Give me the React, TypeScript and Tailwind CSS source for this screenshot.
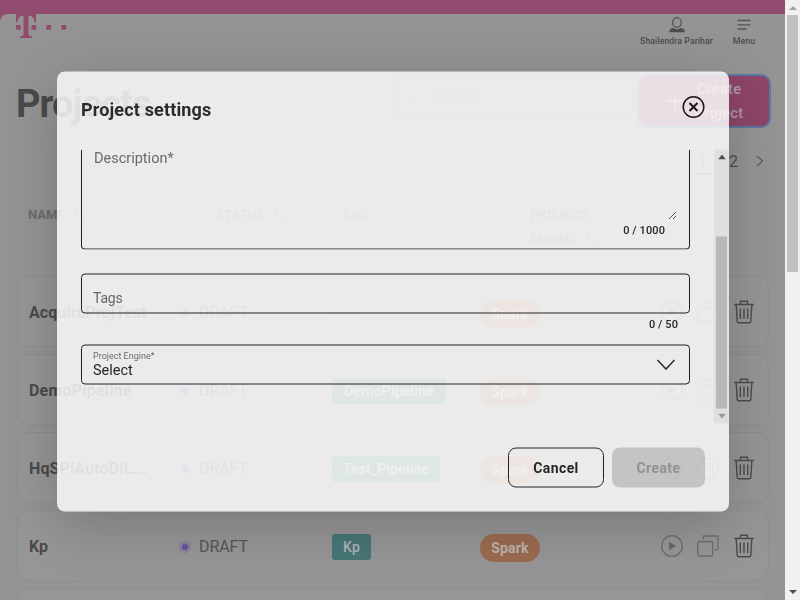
import type { ReactNode } from "react";

type Row = { name: string; nameCls: string; tag: string; tagCls: string };

const rows: Row[] = [
  { name: "AcquireProjTest", nameCls: "tracking-[0.1px]", tag: "----", tagCls: "" },
  { name: "DemoPipeline", nameCls: "tracking-[0.2px]", tag: "DemoPipeline", tagCls: "w-[114px]" },
  { name: "HqSPlAutoDIL...", nameCls: "tracking-[0.1px]", tag: "Test_Pipeline", tagCls: "w-[108px]" },
  { name: "Kp", nameCls: "", tag: "Kp", tagCls: "w-[39px]" },
];

function SortArrows() {
  return (
    <svg width="14" height="14" viewBox="0 0 14 14" fill="none" stroke="#7b7b7b" strokeWidth="1.2">
      <path d="M3.5 11V2M1.5 4.5l2-2.5 2 2.5M11 3v9.500M9 10l2 2.500 2-2.500" />
    </svg>
  );
}

function PlayIcon() {
  return (
    <svg width="24" height="24" viewBox="0 0 24 24" fill="none">
      <circle cx="12" cy="12" r="10.300" stroke="#6e6e6e" strokeWidth="1.300" />
      <path d="M9 7.800v8.400l7-4.200z" fill="#666" />
    </svg>
  );
}

function CopyIcon() {
  return (
    <svg width="24" height="24" viewBox="0 0 24 24" fill="none" stroke="#6e6e6e" strokeWidth="1.300">
      <rect x="1.700" y="7.500" width="15" height="14.500" rx="1.500" />
      <path d="M7.500 5.500V2H22v12.500a1.500 1.500 0 0 1-1.500 1.500H18.500" />
    </svg>
  );
}

function TrashIcon() {
  return (
    <svg width="24" height="26" viewBox="0 0 24 26" fill="none" stroke="#4c4c4c" strokeWidth="1.400">
      <path d="M2.200 5.500H21.800M8.500 5V2.200h7V5M4.200 6l1 16.500a1.500 1.500 0 0 0 1.500 1.300h10.600a1.500 1.500 0 0 0 1.500-1.300l1-16.500M8.300 9.500v10.500M12 9.500v10.500M15.700 9.500v10.500" />
    </svg>
  );
}

function TableRow({ row }: { row: Row }) {
  return (
    <div className="flex h-[71px] shrink-0 items-center rounded-xl border border-[#8e8e8e] bg-[#969696] pr-3 pl-[11px]">
      <div className={`w-[150px] pt-[3px] text-base font-bold text-[#4a4a4a] ${row.nameCls}`}>{row.name}</div>
      <div className="flex w-[153px] items-center pt-[3px]">
        <span className="flex size-3 items-center justify-center rounded-full bg-[#8a8299]">
          <span className="size-[6px] rounded-full bg-[#69529b]" />
        </span>
        <span className="ml-2 text-base tracking-[-0.1px] text-[#555]">DRAFT</span>
      </div>
      <div className="w-[148px] pt-[3px]">
        {row.tag === "----" ? (
          <span className="text-base tracking-[2.500px] text-[#555]">----</span>
        ) : (
          <span
            className={`flex h-[26px] items-center justify-center rounded-[3px] bg-[#477676] text-[14px] font-medium tracking-[0.200px] text-[#b0b6b6] ${row.tagCls}`}
          >
            {row.tag}
          </span>
        )}
      </div>
      <span className="mt-1 flex h-7 w-[60px] items-center justify-center rounded-full bg-[#9b6b50] pt-px text-[14px] font-bold tracking-[0.2px] text-[#bbb4af]">
        Spark
      </span>
      <div className="ml-auto flex items-center gap-3">
        <PlayIcon />
        <CopyIcon />
        <TrashIcon />
      </div>
    </div>
  );
}

function HeadCell({ children, className }: { children: ReactNode; className: string }) {
  return <div className={`pt-px text-[13px] leading-6 font-bold text-[#6c6c6c] ${className}`}>{children}</div>;
}

function Page() {
  return (
    <div className="flex h-[600px] w-[785px] flex-col overflow-hidden bg-[#914b6e]">
      <div className="h-[14px] shrink-0" />
      <div className="flex h-[586px] flex-col rounded-tl-lg bg-[#949494]">
        <header className="flex h-[42px] shrink-0 justify-between pr-[29px] pl-4">
          <svg width="51" height="25" viewBox="0 0 51 25" fill="#914b6e">
            <path d="M0 0H20V8.500H18.700C18.300 4.500 16 1.700 12.500 1.500V19.500c0 2.300 1 3 3.500 3V24H4v-1.500c2.500 0 3.500-.7 3.500-3V1.500C4 1.700 1.700 4.500 1.300 8.500H0Z" />
            <path d="M0 11h4.700v4.700H0zM15.500 11h4.700v4.700h-4.700zM30.300 11H35v4.700h-4.700zM45.500 11h4.700v4.700h-4.700z" />
          </svg>
          <div className="flex gap-[19px] pt-[3px] text-[8.700px] font-medium text-[#4d4d4d]">
            <div className="flex w-[74px] flex-col items-center">
              <svg className="ml-px" width="18" height="16" viewBox="0 0 18 16" fill="none">
                <ellipse cx="9" cy="5.500" rx="4.300" ry="4.800" stroke="#4d4d4d" strokeWidth="1.200" />
                <path d="M1.200 15.300c0-2.800 1.800-4.200 4.200-4.200 2 1.600 5.200 1.600 7.200 0 2.400 0 4.200 1.400 4.200 4.200z" fill="#4d4d4d" />
              </svg>
              <span className="mt-[2px] ml-px leading-3 tracking-[0.08px] whitespace-nowrap">Shailendra Parihar</span>
            </div>
            <div className="flex w-6 flex-col items-center">
              <svg width="14" height="16" viewBox="0 0 14 16" stroke="#555" strokeWidth="1.300">
                <path d="M.5 3.500h13M.5 7.800h13M.5 12h9" />
              </svg>
              <span className="mt-[2px] leading-3 tracking-[0.1px]">Menu</span>
            </div>
          </div>
        </header>
        <div className="flex h-[72px] shrink-0 items-start pr-[14px] pl-[16px]">
          <h1 className="mt-6 w-[377px] shrink-0 text-[38px] leading-[48px] font-bold tracking-[-0.9px] text-[#4a4a4a]">Projects</h1>
          <div className="mt-5 flex h-[39px] w-[240px] shrink-0 items-center rounded border border-[#7b7b7b] pl-[5px] text-base text-[#858585]">
            <svg width="20" height="20" viewBox="0 0 20 20" fill="none" stroke="#858585">
              <circle cx="8" cy="8" r="7" />
              <path d="m13 13 6 6" />
            </svg>
            <span className="ml-3">Search</span>
          </div>
          <div className="mt-[18px] ml-1 flex h-[54px] w-[134px] shrink-0 items-center rounded-[10px] border-2 border-[#5b789f] bg-[#8e4569] pl-7">
            <svg className="shrink-0" width="16" height="16" viewBox="0 0 16 16" stroke="#b5a3ac" strokeWidth="1.300">
              <path d="M8 0v16M0 8h16" />
            </svg>
            <span className="ml-3 w-12 pt-px text-center text-[14.500px] leading-6 font-medium tracking-[0.3px] text-[#ad9aa4]">Create Project</span>
          </div>
        </div>
        <div className="flex h-[74px] shrink-0 items-start justify-end pt-[22px] pr-[19px] text-base text-[#4d4d4d]">
          <span className="w-[14px] border-b-2 border-[#914b6e] text-center leading-[23px] text-[#914b6e]">1</span>
          <span className="ml-[19px]">2</span>
          <svg className="mt-1 ml-4" width="12" height="14" viewBox="0 0 12 14" fill="none" stroke="#5c5c5c" strokeWidth="1.200">
            <path d="m3 2 5.500 5L3 12" />
          </svg>
        </div>
        <div className="flex h-[74px] shrink-0 pl-7">
          <HeadCell className="flex w-[188px] items-center gap-2 self-start">NAME <SortArrows /></HeadCell>
          <HeadCell className="flex w-[126px] items-center gap-2 self-start">STATUS <SortArrows /></HeadCell>
          <HeadCell className="w-[188px]">TAG</HeadCell>
          <HeadCell className="w-20">
            <span className="tracking-[0.3px]">PROJECT</span>
            <span className="flex items-center gap-2">ENGINE <SortArrows /></span>
          </HeadCell>
        </div>
        <div className="flex flex-col gap-[7px] pr-4 pl-[17px]">
          {rows.map((row) => (
            <TableRow key={row.name} row={row} />
          ))}
          <div className="h-[71px] shrink-0 rounded-xl border border-[#8e8e8e] bg-[#969696]" />
        </div>
      </div>
    </div>
  );
}

function Modal() {
  return (
    <div className="absolute top-[71px] left-[57px] flex h-[440px] w-[672px] translate-y-[0.5px] flex-col rounded-lg bg-[rgba(250,250,250,0.85)] text-[#262626] shadow-[0_14px_56px_rgba(0,0,0,0.2)] will-change-transform">
      <div className="flex h-[78px] shrink-0 items-start justify-between pr-6 pl-6">
        <h2 className="mt-[26px] text-[18px] leading-6 font-bold tracking-[0.15px] text-[#292b2e]">Project settings</h2>
        <svg className="mt-6" width="23" height="23" viewBox="0 0 23 23" fill="none" stroke="#24151c">
          <circle cx="11.500" cy="11.500" r="10.300" strokeWidth="1.500" />
          <path d="m7.500 7.500 8 8m0-8-8 8" strokeWidth="2" />
        </svg>
      </div>
      <div className="flex h-[274px] shrink-0 overflow-hidden pl-6">
        <div className="w-[609px]">
          <div className="flex h-[100px] flex-col justify-between rounded-b border border-t-0 border-[#222] pr-3 pl-3">
            <span className="text-[14.500px] leading-[18px] text-[#6a6a6a]">Description*</span>
            <div className="flex flex-col items-end">
              <svg width="9" height="9" viewBox="0 0 9 9" stroke="#555" strokeWidth="1">
                <path d="M1 8.500 8 1.500M5 8.500l3-3" />
              </svg>
              <span className="mt-[3px] mr-3 mb-[10px] text-[11px] leading-4 font-medium tracking-[0.1px]">0 / 1000</span>
            </div>
          </div>
          <div className="mt-6 flex h-10 items-end rounded border border-[#222] pb-[5px] pl-[11px] text-[14px] leading-5 tracking-[-0.2px] text-[#666]">Tags</div>
          <div className="h-[31px] pt-[3px] pr-3 text-right text-[11px] leading-4 font-medium tracking-[0.1px]">0 / 50</div>
          <div className="flex h-10 items-center justify-between rounded border border-[#222] pr-[13px] pl-[11px]">
            <div className="flex flex-col">
              <span className="text-[9px] leading-[11px] text-[#6a6a6a]">Project Engine*</span>
              <span className="text-[14.500px] leading-[18px]">Select</span>
            </div>
            <svg width="20" height="12" viewBox="0 0 20 12" fill="none" stroke="#333" strokeWidth="1.600">
              <path d="m1.500 1.500 8.500 9 8.500-9" />
            </svg>
          </div>
        </div>
        <div className="ml-6 flex w-[15px] flex-col items-center bg-[#dfdfdf]">
          <svg className="mt-[5px] shrink-0" width="8" height="5" viewBox="0 0 8 5" fill="#505050">
            <path d="M0 5 4 0l4 5z" />
          </svg>
          <div className="mt-[77px] h-[172px] w-[11px] shrink-0 bg-[#b8b8b8]" />
          <svg className="mt-[5px] shrink-0" width="8" height="5" viewBox="0 0 8 5" fill="#9a9a9a">
            <path d="M0 0h8L4 5z" />
          </svg>
        </div>
      </div>
      <div className="flex justify-end gap-2 pt-6 pr-6 text-[14px] font-bold">
        <button className="h-10 w-24 rounded-lg border border-[#222] tracking-[0.4px]">Cancel</button>
        <button className="h-10 w-[93px] rounded-lg bg-black/17 tracking-[0.400px] text-[#929292]">Create</button>
      </div>
    </div>
  );
}

export default function App() {
  return (
    <div className="relative flex h-[600px] w-[800px] overflow-hidden font-['Roboto','Liberation_Sans',sans-serif]">
      <Page />
      <div className="flex w-[15px] flex-col items-center bg-[#f1f1f1]">
        <svg className="mt-[6px] shrink-0" width="8" height="4" viewBox="0 0 8 4" fill="#a3a3a3">
          <path d="M0 4 4 0l4 4z" />
        </svg>
        <div className="mt-[5px] h-[257px] w-[11px] bg-[#c1c1c1]" />
        <svg className="mt-auto mb-[6px] shrink-0" width="8" height="4" viewBox="0 0 8 4" fill="#505050">
          <path d="M0 0h8L4 4z" />
        </svg>
      </div>
      <Modal />
    </div>
  );
}
